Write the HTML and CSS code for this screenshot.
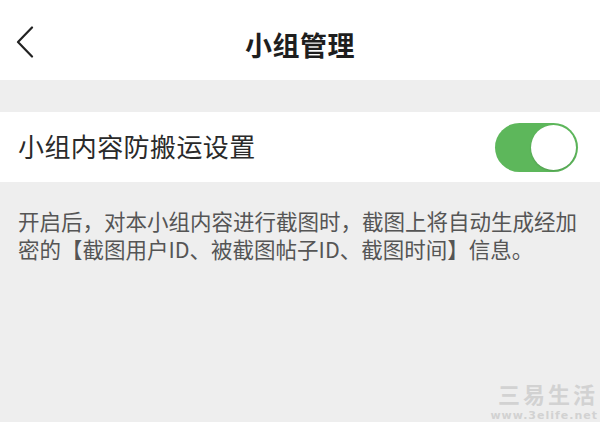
FILE: index.html
```html
<!DOCTYPE html>
<html lang="zh-CN">

<head>
    <meta charset="UTF-8">
    <meta name="viewport" content="width=device-width, initial-scale=1.0">
    <title>小组管理</title>
    <link rel="stylesheet" href="styles.css">
</head>

<body>
    <div class="page">
        <header class="topbar">
            <button class="topbar__back" aria-label="返回">
                <svg width="18" height="32" viewBox="0 0 18 32">
                    <polyline points="16,1.5 2,16 16,30.5" fill="none" stroke="#222" stroke-width="2.2"
                        stroke-linecap="round" stroke-linejoin="round" />
                </svg>
            </button>
            <h1 class="topbar__title">小组管理</h1>
        </header>

        <div class="gap"></div>

        <section class="setting">
            <span class="setting__label">小组内容防搬运设置</span>
            <span class="switch switch--on" role="switch" aria-checked="true">
                <span class="switch__knob"></span>
            </span>
        </section>

        <p class="note">开启后，对本小组内容进行截图时，截图上将自动生成经加密的【截图用户ID、被截图帖子ID、截图时间】信息。</p>

        <div class="watermark">
            <span class="watermark__name">三易生活</span>
            <span class="watermark__url">www.3elife.net</span>
        </div>
    </div>
</body>

</html>
```

FILE: styles.css
```css
* {
    box-sizing: border-box;
}

body {
    margin: 0;
    background-color: #eeeeee;
    color: #222;
    font-family: "Noto Sans CJK SC", "Noto Sans", sans-serif;
}

.page {
    position: relative;
    height: 422px;
    overflow: hidden;
}

.topbar {
    display: flex;
    align-items: center;
    justify-content: center;
    position: relative;
    height: 80px;
    padding-top: 8px;
    background-color: #fff;
}

.topbar__back {
    position: absolute;
    left: 16px;
    top: 26px;
    padding: 0;
    border: 0;
    background: none;
    line-height: 0;
}

.topbar__title {
    margin: 0;
    font-size: 27px;
    font-weight: 700;
    color: #1e1e1e;
    letter-spacing: 0.5px;
}

.gap {
    height: 32px;
}

.setting {
    display: flex;
    align-items: center;
    justify-content: space-between;
    height: 70px;
    padding: 0 22px 0 18px;
    background-color: #fff;
}

.setting__label {
    font-size: 26px;
    letter-spacing: 0.4px;
    color: #2a2a2a;
    margin-top: -4px;
}

.switch {
    display: flex;
    align-items: center;
    width: 83px;
    height: 49px;
    padding: 2px;
    border-radius: 25px;
    background-color: #5db75b;
}

.switch--on {
    justify-content: flex-end;
}

.switch__knob {
    width: 45px;
    height: 45px;
    border-radius: 50%;
    background-color: #fff;
    box-shadow: 0 1px 2px rgba(0, 0, 0, 0.15);
}

.note {
    margin: 0;
    padding: 25px 18px 0 18px;
    font-size: 21.5px;
    line-height: 28px;
    color: #555;
}

.watermark {
    position: absolute;
    right: 2px;
    bottom: 0;
    display: flex;
    flex-direction: column;
    align-items: flex-end;
    gap: 6px;
    color: #d2d2d2;
    font-weight: 700;
}

.watermark__name {
    display: block;
    height: 22px;
    font-size: 22px;
    line-height: 22px;
    letter-spacing: 3px;
}

.watermark__url {
    display: block;
    height: 12px;
    font-family: "DejaVu Sans", sans-serif;
    font-size: 11px;
    line-height: 12px;
    letter-spacing: 1px;
}
```
